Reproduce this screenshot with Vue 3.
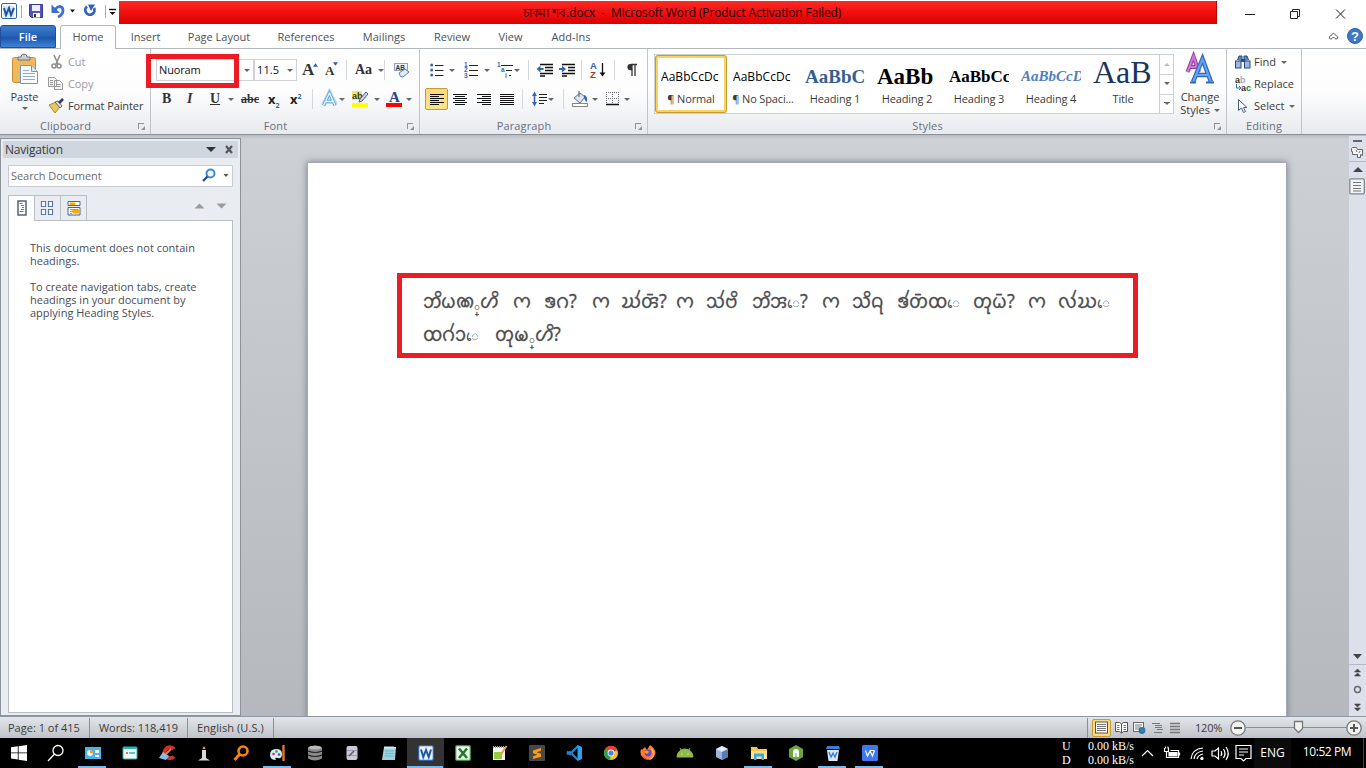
<script setup>
const tabs = ['Home', 'Insert', 'Page Layout', 'References', 'Mailings', 'Review', 'View', 'Add-Ins']
const styles = [
  { cls: 's-normal', sample: 'AaBbCcDc', name: '¶ Normal' },
  { cls: 's-normal', sample: 'AaBbCcDc', name: '¶ No Spaci...' },
  { cls: 's-h1', sample: 'AaBbCc', name: 'Heading 1' },
  { cls: 's-h2', sample: 'AaBb', name: 'Heading 2' },
  { cls: 's-h3', sample: 'AaBbCc', name: 'Heading 3' },
  { cls: 's-h4', sample: 'AaBbCcD', name: 'Heading 4' },
  { cls: 's-title', sample: 'AaB', name: 'Title' }
]
const line1 = ['𑄃𑄨𑄠𑄚◌𑄳𑄦𑄨', '𑄇', '𑄎𑄉?', '𑄇', '𑄊𑄧𑄢𑄴?', '𑄇', '𑄥𑄧𑄝𑄨', '𑄃𑄨𑄞◌𑄬?', '𑄇', '𑄥𑄨𑄙𑄪', '𑄎𑄧𑄖𑄴𑄗◌𑄬', '𑄖𑄪𑄠𑄴?', '𑄇', '𑄣𑄧𑄊◌𑄬']
const line2 = ['𑄗𑄉𑄧𑄘◌𑄬', '𑄖𑄪𑄟◌𑄳𑄦𑄨?']
const lines = [line1, line2].map((l) => l.map((w) => w.split(/(◌𑄳|◌𑄬)/u).filter(Boolean)))
const partClass = (p) => (p === '◌𑄳' ? 'vir' : p === '◌𑄬' ? 'ev' : 'pt')
</script>

<template>
  <div class="win">
    <header class="title">
      <svg class="qat" width="119" height="24" viewBox="0 0 119 24">
        <rect x="1.5" y="3.500" width="15" height="15" rx="1.500" fill="#fff" stroke="#2b65ad" />
        <rect x="3" y="6" width="11" height="11" fill="#d8e8f8" /><path d="M4 8l2 7 3-7 2 7 3-7" fill="none" stroke="#1c58a6" stroke-width="2" />
        <path d="M21.500 5v13M105.500 5v13" stroke="#aab" />
        <path d="M29.500 4.500h13v13h-11l-2-2z" fill="#5357bd" stroke="#3a3a96" /><rect x="32" y="5" width="8" height="6" fill="#eef" /><rect x="33" y="13" width="7" height="4.500" fill="#fff" /><rect x="34" y="14" width="2" height="3" fill="#333" />
        <path d="M55 9.500c4-5 8-3 8 1 0 3-2 5-5 6.500" fill="none" stroke="#3c6fd0" stroke-width="2.800" /><path d="M51.500 4.500v8.500h8.500z" fill="#3c6fd0" />
        <path d="M70 9.500h5l-2.500 3z" fill="#111" />
        <path d="M87 6.500a4.600 4.600 0 1 0 7 1.500" fill="none" stroke="#2f62c0" stroke-width="2.800" /><path d="M88 4.500h7l-4 6.500z" fill="#2f62c0" />
        <path d="M109 9.500h7" stroke="#111" stroke-width="1.400" /><path d="M109.500 12h6l-3 3z" fill="#111" />
      </svg>
      <div class="red"><span>চাকমা শব.docx&nbsp; -&nbsp; Microsoft Word (Product Activation Failed)</span></div>
      <svg class="ctl" width="149" height="24" viewBox="0 0 149 24" fill="none" stroke="#222">
        <path d="M28 14.500h10M73.500 11.500h7v7h-7zM75.500 11.500v-2h7v7h-2M119 9.500l9 9M128 9.500l-9 9" />
      </svg>
    </header>

    <nav class="tabs">
      <div class="file">File</div>
      <div v-for="t in tabs" :key="t" class="tab" :class="['t-' + t.slice(0, 4).trim(), { on: t === 'Home' }]">{{ t }}</div>
      <svg class="help" width="46" height="25" viewBox="0 0 46 25">
        <path d="M9.500 14.500q-1-2 1-2.500l3-3 3 3q2 .500 1 2.500-1.500 1-2.500 0l-1.500-1.500-1.500 1.500q-1 1-2.500 0z" fill="#fff" stroke="#555" />
        <circle cx="35" cy="12" r="7.500" fill="#3c78c8" stroke="#2b61ae" /><text x="35" y="16.500" class="q">?</text>
      </svg>
    </nav>

    <section class="ribbon">
      <div class="grp g-clip">
        <div class="gbody clip">
          <div class="big paste">
            <svg width="30" height="34" viewBox="0 0 30 34">
              <rect x="2.500" y="3.500" width="23" height="25" rx="2" fill="#edb95c" stroke="#c98e33" /><path d="M8 6V3h3q0-3 3-3t3 3h3v3z" fill="#c9ccd2" stroke="#70757d" />
              <path d="M10.500 11.500h11l6 6v12h-17z" fill="#f6faff" stroke="#7b95b8" /><path d="M21.500 11.500v6h6" fill="#dfe9f5" stroke="#7b95b8" /><path d="M13 19.500h12M13 22.500h12M13 25.500h12M13 16.500h6" stroke="#93abc9" />
            </svg>
            <span>Paste</span><i class="dd"></i>
          </div>
          <div class="list">
            <div class="row off"><svg width="18" height="16" viewBox="0 0 18 16" fill="none" stroke="#8f8f8f" stroke-width="1.600"><path d="M5 1l4 9M11 1L7 10" /><circle cx="5" cy="12" r="2" /><circle cx="10" cy="12" r="2" /></svg>Cut</div>
            <div class="row off"><svg width="18" height="16" viewBox="0 0 18 16" fill="#f4f4f4" stroke="#999"><path d="M-.5 1.500h6l2 2v7h-8zM5.500 4.500h5l3 3v6h-8z" /><path d="M1 4.500h3M1 6.500h3M1 8.500h3M7.500 8.500h4M7.500 10.500h4" /></svg>Copy</div>
            <div class="row"><svg width="18" height="16" viewBox="0 0 18 16"><path d="M0 7l7-3 4 5-5 6z" fill="#e8c65a" stroke="#b08a2c" /><path d="M6 4l5 6 2-2-4-5z" fill="#ddd" stroke="#666" /><path d="M10 5l4-4" stroke="#333a66" stroke-width="2.600" /></svg>Format Painter</div>
          </div>
        </div>
        <div class="glabel">Clipboard<i class="launch"></i></div>
      </div>

      <div class="grp g-font">
        <div class="gbody">
          <div class="r1 fr1">
            <div class="box fname"><span>Nuoram</span><i class="dd"></i></div>
            <div class="box fsize"><span>11.5</span><i class="dd"></i></div>
            <span class="ser b18">A<svg class="sup" width="5" height="4" viewBox="0 0 6 4"><path d="M0 4h6L3 0z" fill="#2e5fa8" /></svg></span>
            <span class="ser b14">A<svg class="sup" width="5" height="4" viewBox="0 0 6 4"><path d="M0 0h6L3 4z" fill="#2e5fa8" /></svg></span>
            <i class="sep"></i><span class="ser b15">Aa</span><i class="dd"></i><i class="sep"></i>
            <svg width="17" height="17" viewBox="0 0 17 17"><rect x="1.500" y="1.500" width="13" height="7" fill="#eef4fc" stroke="#8ba4c8" /><text x="2.500" y="7.500" class="tiny">AB</text><path d="M6 11l6-4 4 3-6 5q-3 1-4-4z" fill="#e4ecf8" stroke="#5d7bab" /></svg>
          </div>
          <div class="r2 fr2">
            <b class="ser">B</b><b class="ser it">I</b><b class="ser un">U</b><i class="dd"></i><b class="ser st">abc</b>
            <b class="x">x<sub>2</sub></b><b class="x">x<sup>2</sup></b><i class="sep"></i>
            <svg width="18" height="18" viewBox="0 0 18 18"><path d="M2.500 15L8.500 3l6 12M5 11.500h8" fill="none" stroke="#b8dcf4" stroke-width="5" /><path d="M2.500 15.500L8.500 3l5.500 12.500M5 11.500h7" fill="none" stroke="#5aa2d4" stroke-width="3" /><path d="M2.500 15.500L8.500 3l5.500 12.500M5 11.500h7" fill="none" stroke="#f4fbff" stroke-width="1.300" /></svg><i class="dd"></i>
            <svg width="18" height="18" viewBox="0 0 18 18"><rect x="0" y="1" width="10" height="9" fill="#f7ea5b" /><text x="0" y="9" class="ab">ab</text><path d="M8 9l6-7 2 2-6 7-3 1z" fill="#c8d6e8" stroke="#4b5f80" /><rect x="0" y="13" width="16" height="4" fill="#ff0" /></svg><i class="dd"></i>
            <svg width="18" height="18" viewBox="0 0 18 18"><text x="3" y="12" class="fa">A</text><rect x="0" y="13" width="16" height="4" fill="#f00" /></svg><i class="dd"></i>
          </div>
        </div>
        <div class="glabel">Font<i class="launch"></i></div>
      </div>

      <div class="grp g-para">
        <div class="gbody">
          <div class="r1 pr1">
            <svg width="15" height="14" viewBox="0 0 15 14"><g fill="#3565b5"><circle cx="1.700" cy="2" r="1.500" /><circle cx="1.700" cy="7" r="1.500" /><circle cx="1.700" cy="12" r="1.500" /></g><path d="M5 2.500h8.500M5 7.500h8.500M5 12.500h8.500" stroke="#222" /></svg><i class="dd"></i>
            <svg width="15" height="16" viewBox="0 0 15 16"><g class="num"><text x="0" y="4.500">1</text><text x="0" y="10">2</text><text x="0" y="15.500">3</text></g><path d="M5 3.500h9M5 8.500h9M5 13.500h9" stroke="#222" /></svg><i class="dd"></i>
            <svg width="17" height="16" viewBox="0 0 17 16"><g class="num"><text x="0" y="4.500">1</text><text x="4" y="10">a</text><text x="8" y="15.500">i</text></g><path d="M4 3.500h12M9 8.500h6M12 13.500h2" stroke="#222" /></svg><i class="dd"></i>
            <i class="sep"></i>
            <svg width="16" height="14" viewBox="0 0 16 14"><path d="M3 1.500h13M8 4.500h8M8 7.500h8M3 10.500h13M3 13h5" stroke="#111" stroke-width="1.500" /><path d="M-.5 6l4-3.500v2.500h3v2h-3v2.500z" fill="#3565b5" /></svg>
            <svg width="16" height="14" viewBox="0 0 16 14"><path d="M3 1.500h13M9 4.500h7M9 7.500h7M3 10.500h13M3 13h5" stroke="#111" stroke-width="1.500" /><path d="M7 6L3 2.500v2.500H0v2h3v2.500z" fill="#3565b5" /></svg>
            <i class="sep"></i>
            <svg width="16" height="18" viewBox="0 0 16 18"><text x="0" y="8" class="az blue">A</text><text x="0" y="16.500" class="az">Z</text><path d="M12.500 2v12" stroke="#111" stroke-width="1.300" /><path d="M9.500 11.500h6l-3 4z" fill="#111" /></svg>
            <i class="sep"></i>
            <svg width="11" height="14" viewBox="0 0 11 14"><path d="M5 1.500h6M6 1v12M9 1v12" stroke="#333" stroke-width="1.300" /><path d="M6 1H4.500a3 3 0 0 0 0 6.200H6z" fill="#333" /></svg>
          </div>
          <div class="r2 pr2">
            <div class="active"><svg width="14" height="13" viewBox="0 0 14 13"><path d="M0 1.500h14M0 3.500h9M0 5.500h14M0 7.500h9M0 9.500h14M0 11.500h9" class="bar" /></svg></div>
            <svg width="14" height="13" viewBox="0 0 14 13"><path d="M0 1.500h14M2 3.500h10M0 5.500h14M2 7.500h10M0 9.500h14M2 11.500h10" class="bar" /></svg>
            <svg width="14" height="13" viewBox="0 0 14 13"><path d="M0 1.500h14M5 3.500h9M0 5.500h14M5 7.500h9M0 9.500h14M5 11.500h9" class="bar" /></svg>
            <svg width="14" height="13" viewBox="0 0 14 13"><path d="M0 1.500h14M0 3.500h14M0 5.500h14M0 7.500h14M0 9.500h14M0 11.500h14" class="bar" /></svg>
            <i class="sep"></i>
            <svg width="16" height="16" viewBox="0 0 16 16"><path d="M0 5l2.500-4.500L5 5H3.300v6H5l-2.500 4.500L0 11h1.700V5z" fill="#3565b5" /><path d="M7 3.500h8M7 6.500h8M7 9.500h8M7 12.500h5" stroke="#222" /></svg><i class="dd"></i>
            <i class="sep"></i>
            <svg width="18" height="16" viewBox="0 0 18 16"><path d="M2 7l6-5 5 4-5 6z" fill="#d9e4f4" stroke="#5a6f94" /><path d="M7 0v6" stroke="#555" /><path d="M12 4q4 1 3 7-2-1-3-4z" fill="#3565b5" /><rect x=".5" y="12.500" width="15" height="3" fill="#fff" stroke="#888" /></svg><i class="dd"></i>
            <svg width="14" height="14" viewBox="0 0 14 14"><path d="M.5 0v13M6.500 0v13M12.500 0v13M0 .5h13M0 6.500h13" stroke="#667" stroke-dasharray="1 1" /><path d="M0 12.500h13" stroke="#111" stroke-width="1.500" /></svg><i class="dd"></i>
          </div>
        </div>
        <div class="glabel">Paragraph<i class="launch"></i></div>
      </div>

      <div class="grp g-styles">
        <div class="gbody sbody">
          <div class="gallery">
            <div v-for="(s, i) in styles" :key="i" class="scell" :class="{ sel: i === 0 }"><div class="sample" :class="s.cls">{{ s.sample }}</div><div class="sname">{{ s.name }}</div></div>
            <div class="gscroll"><i class="dd up dim"></i><i class="dd"></i><i class="dd more"></i></div>
          </div>
          <div class="big change">
            <svg width="32" height="30" viewBox="0 0 32 30"><path d="M3.500 18L9.500 2.500 15 18M5 13h8" fill="none" stroke="#9b3fa8" stroke-width="4" /><path d="M3.500 18L9.500 2.500 15 18M5 13h8" fill="none" stroke="#c77ad0" stroke-width="2" /><path d="M9 28L18.500 5 27 28M12 21h13" fill="none" stroke="#2d6ac4" stroke-width="4.500" /><path d="M9 28L18.500 5 27 28M12 21h13" fill="none" stroke="#6ba4ea" stroke-width="2" /><path d="M6 28.500h6M22 28.500h8" stroke="#2d6ac4" stroke-width="2" /></svg>
            <span>Change</span><span>Styles <i class="dd in"></i></span>
          </div>
        </div>
        <div class="glabel">Styles<i class="launch"></i></div>
      </div>

      <div class="grp g-edit">
        <div class="gbody list elist">
          <div class="row"><svg width="19" height="16" viewBox="0 0 19 16"><path d="M2.500 6l1.500-4h3v5M13.500 6l-1.500-4H9v5" fill="#5f83bb" stroke="#274a80" /><rect x=".5" y="7" width="5.500" height="7" fill="#9cb8de" stroke="#274a80" /><rect x="9.500" y="7" width="5.500" height="7" fill="#9cb8de" stroke="#274a80" /><path d="M6 6.500h4" stroke="#274a80" stroke-width="3" /></svg>Find <i class="dd in"></i></div>
          <div class="row"><svg width="19" height="16" viewBox="0 0 19 16"><text x="0" y="7" class="rep">a<tspan fill="#aaa">b</tspan></text><text x="6" y="15" class="rep">a<tspan fill="#178a2c">c</tspan></text><path d="M1.500 8v4h4M4 10l2 2-2 2" fill="none" stroke="#3565b5" /></svg>Replace</div>
          <div class="row"><svg width="19" height="16" viewBox="0 0 19 16"><path d="M3.500 1.500v11l3-2.500 2 4.500 2-1-2-4h3.500z" fill="#fff" stroke="#4a6080" /></svg>Select <i class="dd in"></i></div>
        </div>
        <div class="glabel">Editing</div>
      </div>
      <div class="hl hl-font"></div>
    </section>

    <main class="work">
      <aside class="pane">
        <div class="phead">Navigation<svg width="34" height="17" viewBox="0 0 34 17"><path d="M2 6h10l-5 5z" fill="#333" /><path d="M22 5l6 7M28 5l-6 7" stroke="#555" stroke-width="2.200" /></svg></div>
        <div class="search">Search Document<svg width="32" height="18" viewBox="0 0 32 18"><circle cx="10.500" cy="7.500" r="4" fill="#eaf6ff" stroke="#3b8cd0" stroke-width="2" /><path d="M7.500 10.500l-4.500 4.500" stroke="#274a98" stroke-width="2.400" /><path d="M23.500 8h5l-2.500 3z" fill="#555" /></svg></div>
        <div class="ptabs">
          <div class="on"><svg width="16" height="17" viewBox="0 0 16 17"><rect x="4" y="1" width="8" height="14" fill="#fff" stroke="#44597a" stroke-width="1.400" /><path d="M5.500 3.500h3M7 5.500h3M8 7.500h2M7 9.500h3M5.500 11.500h4" stroke="#777" /></svg></div>
          <div><svg width="16" height="17" viewBox="0 0 16 17" fill="#fff" stroke="#5c78a6" stroke-width="1.200"><path d="M1.500 1.500h4v5h-4zM8.500 1.500h4v5h-4zM1.500 9.500h4v5h-4zM8.500 9.500h4v5h-4z" /></svg></div>
          <div><svg width="16" height="17" viewBox="0 0 16 17"><path d="M2 1.500h12v4H2zM2 7.500h12v7.500H2z" fill="#fff" stroke="#4b6288" /><path d="M4 3h5v1.500H4zM7 10h6v3H7z" fill="#f3ae00" stroke="#f3ae00" /><path d="M4 9.500h8M4 11.500h3M4 13.500h2" stroke="#89a" /></svg></div>
          <svg class="pn" width="36" height="12" viewBox="0 0 36 12" fill="#9b9b9b"><path d="M-1.500 8.500h10l-5-5zM20.500 3.500h10l-5 5z" /></svg>
        </div>
        <div class="pbody"><p>This document does not contain<br>headings.</p><p>To create navigation tabs, create<br>headings in your document by<br>applying Heading Styles.</p></div>
      </aside>
      <div class="canvas">
        <div class="page">
          <div class="frame">
            <div v-for="(l, n) in lines" :key="n" class="ln" :class="'l' + (n + 1)">
              <span v-for="(w, i) in l" :key="i"><span v-for="(p, k) in w" :key="k" :class="partClass(p)">{{ p }}</span></span>
            </div>
          </div>
        </div>
      </div>
      <div class="vscroll">
        <svg width="17" height="62" viewBox="0 0 17 62"><path d="M4 5h9" stroke="#666" stroke-width="2" /><path d="M3.500 11.500h4l1 2h5v6l-2-1v3h-3v-3h-5v-3h-1v-3z" fill="#f4f4f4" stroke="#666" /><path d="M7 14l1 2M10 17l1-2" stroke="#777" /><path d="M0 25.500h17" stroke="#b4bac4" /><path d="M4 36h10l-5-5z" fill="#444" /><rect x=".8" y="42.800" width="14.500" height="15" rx="1" fill="#f1f3f6" stroke="#7e8794" stroke-width="1.300" /><path d="M4 46.500h8M4 49.500h8M4 52.500h8M4 55h8" stroke="#777" /></svg>
        <svg width="17" height="66" viewBox="0 0 17 66"><path d="M4 4h9l-4.500 5z" fill="#444" /><path d="M0 14.500h17" stroke="#b4bac4" /><path d="M5.500 22h6l-3-3zM5.500 26h6l-3-3z" fill="#444" stroke="#444" stroke-width=".6" /><circle cx="8.500" cy="39.500" r="3" fill="none" stroke="#666" stroke-width="1.400" /><path d="M5.500 54h6l-3 3zM5.500 58h6l-3 3z" fill="#444" stroke="#444" stroke-width=".6" /></svg>
      </div>
    </main>

    <footer class="status">
      <div class="st1">Page: 1 of 415</div><div class="st2">Words: 118,419</div><div class="st3">English (U.S.)</div>
      <div class="views">
        <div class="von"><svg width="13" height="13" viewBox="0 0 13 13"><rect x=".5" y="1" width="12" height="11" fill="#fff" stroke="#555" /><path d="M2 3.500h9M2 5.500h9M2 7.500h9M2 9.500h9" stroke="#777" /></svg></div>
        <svg width="13" height="13" viewBox="0 0 13 13"><path d="M.5 1.500h4l2 1.500 2-1.500h4v9h-4L6.500 12l-2-1.500h-4zM6.500 3v9" fill="#fff" stroke="#555" /><path d="M2 4.500h2.500M2 6.500h2.500M2 8.500h2.500M8.500 4.500H11M8.500 6.500H11M8.500 8.500H11" stroke="#777" /></svg>
        <svg width="13" height="13" viewBox="0 0 13 13"><rect x=".5" y="1.500" width="10" height="9" fill="#fff" stroke="#666" /><path d="M2 4h7M2 6h6M2 8h4" stroke="#777" /><circle cx="9" cy="9.500" r="3.400" fill="#2a73b8" /><path d="M8 8l3 1-2 2z" fill="#46a24a" /></svg>
        <svg width="13" height="13" viewBox="0 0 13 13" stroke="#777"><path d="M1 2.500h8M4 4.500h7M4 6.500h7M6 8.500h6M3 11.500h8" /></svg>
        <svg width="13" height="13" viewBox="0 0 13 13" stroke="#777"><path d="M1 2.500h10M1 5.500h10M1 8.500h10M1 11.500h10" stroke-width="1.600" /></svg>
      </div>
      <span class="pct">120%</span>
      <svg class="zoom" width="136" height="20" viewBox="0 0 136 20"><path d="M16 9.500h104" stroke="#7f90a8" /><g fill="#f2f2f2" stroke="#777" stroke-width="1.300"><circle cx="8" cy="10" r="7.200" /><circle cx="124" cy="10" r="7.200" /><path d="M64.500 3.500h8v7l-4 4-4-4z" /></g><path d="M4 10h8M120 10h8M124 6v8" stroke="#555" stroke-width="2" /></svg>
    </footer>

    <footer class="task">
      <div><svg viewBox="0 0 16 16"><path d="M0 2.300l6.800-1v6.200H0zM7.600 1.200L16 0v7.500H7.600zM0 8.300h6.800v6.300l-6.800-1zM7.600 8.300H16V16l-8.400-1.200z" fill="#fff" /></svg></div>
      <div><svg viewBox="0 0 16 16"><circle cx="10" cy="5.500" r="5" fill="none" stroke="#fff" stroke-width="1.300" /><path d="M6.500 9L0 16" stroke="#fff" stroke-width="1.300" /></svg></div>
      <div class="run"><svg viewBox="0 0 16 16"><rect y="2" width="16" height="12" fill="#48b4ee" /><circle cx="5" cy="8" r="3" fill="#e9f7ff" /><path d="M5 8V5a3 3 0 0 1 3 3z" fill="#f69a1c" /><path d="M10 5h4v3h-4zM10 10h4v2h-4z" fill="#fff" /></svg></div>
      <div><svg viewBox="0 0 16 16"><rect x="1" y="2" width="14" height="12" rx="1" fill="#eefaf9" stroke="#2bb6b0" /><path d="M1 2h14v2H1z" fill="#2bb6b0" /><path d="M4 8h2" stroke="#f06a4c" stroke-width="2" /><path d="M7 8h6" stroke="#2bb6b0" stroke-width="1.500" /></svg></div>
      <div><svg viewBox="0 0 16 16"><path d="M15 4A5.500 5.500 0 1 0 15 11.500" fill="none" stroke="#d62c2c" stroke-width="4" /><path d="M0 13l4-6 6 4-3 4z" fill="#8abce8" /><path d="M7 9l5-5" stroke="#c58b4a" stroke-width="2" /></svg></div>
      <div><svg viewBox="0 0 16 16"><path d="M6 5h4v8l4 2.500H2L6 13z" fill="#d9d9d9" /><path d="M8 1l1.500 3h-3z" fill="#f4a640" /></svg></div>
      <div><svg viewBox="0 0 16 16"><circle cx="10" cy="6" r="4.500" fill="none" stroke="#f5820b" stroke-width="2.600" /><path d="M6.500 9.500L1.500 15" stroke="#f5820b" stroke-width="3" /></svg></div>
      <div class="run"><svg viewBox="0 0 16 16"><path d="M0 10q0-6 6-6t6 5-4 4-2 2q-6 0-6-5z" fill="#d6ecf7" /><circle cx="3.500" cy="9" r="1.300" fill="#d83b3b" /><circle cx="6.500" cy="6.500" r="1.300" fill="#3b9b4b" /><circle cx="9" cy="9.500" r="1.300" fill="#2c66c9" /><path d="M13.500 0v16" stroke="#dd7b22" stroke-width="2.400" /></svg></div>
      <div><svg viewBox="0 0 16 16"><path d="M1 2.500q7-4 14 0v11q-7 4-14 0z" fill="#8a8a8a" /><path d="M1 6q7 3 14 0M1 10q7 3 14 0" fill="none" stroke="#222" stroke-width="1.200" /><ellipse cx="8" cy="2.500" rx="6.500" ry="1.700" fill="#bbb" /></svg></div>
      <div><svg viewBox="0 0 16 16"><rect x="2.500" y="1" width="11" height="14" rx="2" fill="#c9cbd4" /><path d="M3 5.500h10M3 10.500h10" stroke="#9a9dab" /><path d="M5 11l5-5" stroke="#555c72" stroke-width="1.600" /></svg></div>
      <div><svg viewBox="0 0 16 16"><path d="M3 2h12l-1 13H1z" fill="#9bd3de" /><path d="M3 2h12v1.500H3z" fill="#dfeef2" /><path d="M4 1v2M6 1v2M8 1v2M10 1v2M12 1v2" stroke="#ddd" /><path d="M4 6h9M4 8.500h9M3.500 11h9" stroke="#5fa3b4" stroke-width=".6" /></svg></div>
      <div class="run act"><svg viewBox="0 0 16 16"><rect x=".7" y=".7" width="14.600" height="14.600" rx="1.500" fill="#e9f1fb" stroke="#2b65ad" stroke-width="1.200" /><path d="M3 4.500l2.300 7.500L8 5l2.700 7L13 4.500" fill="none" stroke="#1c58a6" stroke-width="2" /></svg></div>
      <div><svg viewBox="0 0 16 16"><rect x=".7" y=".7" width="14.600" height="14.600" rx="1" fill="#eef7ec" stroke="#3c8c3c" stroke-width="1.200" /><path d="M4 3.500l8 9.500M12 3.500L4 13" stroke="#237a2d" stroke-width="2.600" /></svg></div>
      <div><svg viewBox="0 0 16 16"><path d="M1 2h12v13H1z" fill="#f4f6ee" /><path d="M2 7h8v7H2z" fill="#8fcf3c" /><path d="M1 2h12" stroke="#999" stroke-width="2" stroke-dasharray="1 1" /><path d="M8 11l6.500-10" stroke="#e2a13a" stroke-width="2" /></svg></div>
      <div><svg viewBox="0 0 16 16"><rect width="16" height="16" rx="1" fill="#474747" /><path d="M12 3v2.800L7.500 7.300 12 8.700v3L4 14v-2.800l4.400-1.400L4 8.300V5.500z" fill="#ff9a14" /></svg></div>
      <div><svg viewBox="0 0 16 16"><path d="M12 1L4 9 1 6.500M12 15L4 7 1 9.500" fill="none" stroke="#1c86d0" stroke-width="2.200" /><path d="M11.500 0L16 2v12l-4.500 2z" fill="#2aa3f0" /></svg></div>
      <div><svg viewBox="0 0 16 16"><circle cx="8" cy="8" r="7" fill="#f4c425" /><path d="M8 8L1.900 4.500A7 7 0 0 1 14.500 5z" fill="#df4232" /><path d="M8 8L1.900 4.500A7 7 0 0 0 7 15z" fill="#2e9e50" /><circle cx="8" cy="8" r="3.400" fill="#fff" /><circle cx="8" cy="8" r="2.600" fill="#4385f0" /></svg></div>
      <div><svg viewBox="0 0 16 16"><path d="M1 4q1 1 2 0l2-2 2 3 3-5q5 3 5.500 8A7.600 7.600 0 1 1 1 4z" fill="#ff7a24" /><path d="M11 2q4 4 3 8a6 6 0 0 1-6 5q5-2 5-6z" fill="#ffc52e" /><path d="M2 10a6.500 6.500 0 0 0 9 4q-6 1-9-4z" fill="#e8264f" /><circle cx="8" cy="8" r="3.400" fill="#6b45c8" /><path d="M4 7q3-3 5 0l-2 2z" fill="#ff9a2c" /></svg></div>
      <div><svg viewBox="0 0 16 16"><path d="M0 12a8 8 0 0 1 16 0zM4 5L3 3M12 5l1-2" fill="#8fba48" stroke="#8fba48" /><path d="M4.500 9h1M10.500 9h1" stroke="#fff" /></svg></div>
      <div><svg viewBox="0 0 16 16"><path d="M8 1l6 3v8l-6 3-6-3V4z" fill="#9cb3da" /><path d="M8 1l6 3-6 3-6-3z" fill="#e2ebf8" /><path d="M8 7l6-3v8l-6 3z" fill="#5d7bb3" /></svg></div>
      <div class="run"><svg viewBox="0 0 16 16"><path d="M0 2h6l1 2h9v10H0z" fill="#f7c64b" /><path d="M0 6h16v8H0z" fill="#fde08a" /><path d="M3 15V8.500h10V15h-2.500v-3.500h-5V15z" fill="#35a7e8" /></svg></div>
      <div><svg viewBox="0 0 16 16"><path d="M8 0l7 4v8l-7 4-7-4V4z" fill="#69a83e" /><path d="M5 12V7a3 3 0 0 1 6 0v5H8.500V8h-1v4z" fill="#fff" /></svg></div>
      <div class="run"><svg viewBox="0 0 16 16"><path d="M2 5h12l-1.500 11h-9z" fill="#dde6f4" /><path d="M1 4l1-3h12l1 3z" fill="#3b7cdf" /><path d="M4 7l2 5 2-4 2 4 2-5" fill="none" stroke="#3b7cdf" stroke-width="1.400" /></svg></div>
      <div class="run"><svg viewBox="0 0 16 16"><rect width="16" height="16" rx="1.500" fill="#3f79f2" /><path d="M3.500 5.500l2 5.500L8 6l2.500 5 2-5.500M8 5.500h4.500" fill="none" stroke="#fff" stroke-width="1.200" /></svg></div>
      <div class="tray">
        <div class="net"><span>U</span><span>0.00 kB/s</span><span>D</span><span>0.00 kB/s</span></div>
        <svg width="112" height="30" viewBox="0 0 112 30" fill="none" stroke="#fff" stroke-width="1.200">
          <path d="M1 18l5.500-5.500L12 18" /><path d="M29.500 12.500h8v7h-12v-4" /><path d="M28 14.500h8v3.500h-8z" fill="#fff" /><path d="M38.500 14.500v3M23.500 10v3.500h4V10M24.500 8.500v2M27 8.500v2M25.500 14v2" />
          <path d="M50 21q1-10 12-11M53 21q1-7 9-8M56 21q1-4 6-5M59.500 21l2-2" /><circle cx="61" cy="20.500" r="1" fill="#fff" />
          <path d="M71 13h3l3.500-3v11L74 18h-3zM80 13q1.500 2.500 0 5M82.500 11q3 4.500 0 9M85 9q4.500 6.500 0 13" />
          <path d="M95 7.500h15v13h-5l-2.500 2.500-2.500-2.500h-5zM98 11h9M98 14h9M98 17h5" />
        </svg>
        <div class="eng">ENG</div><div class="clock">10:52 PM</div>
      </div>
    </footer>
  </div>
</template>

<style>
html, body { margin: 0; overflow: hidden; }
</style>
<style scoped>
.win { width: 1366px; height: 768px; display: flex; flex-direction: column; font: 11px/14px "Open Sans", "Noto Sans", sans-serif; color: #3b3b3b; background: #fff; overflow: hidden; }
svg { display: block; flex: none; overflow: visible; }
svg text { font-family: "Liberation Sans", sans-serif; font-weight: bold; }
i { font-style: normal; }
.title { height: 24px; display: flex; }
.red { width: 1098px; height: 23px; margin-top: 1px; box-sizing: border-box; border-right: 1px solid #b00; background: linear-gradient(#ff2a24, #f01010 50%, #dc0000); color: #1d0000; font-size: 12px; line-height: 24px; text-align: center; white-space: nowrap; }
.red span { letter-spacing: -.12px; margin-left: 29px; }
.tabs { height: 25px; display: flex; border-bottom: 1px solid #b3b8be; box-sizing: border-box; }
.file { width: 56px; margin-top: 1px; background: linear-gradient(#3d7ccb, #2560b4 50%, #1c55ab 55%, #3f84d6); color: #fff; text-align: center; line-height: 22px; font-weight: 600; border-radius: 3px 3px 0 0; border: 1px solid #1e4f98; box-sizing: border-box; }
.tab { line-height: 26px; text-align: center; color: #4c5057; font-size: 11px; }
.tab.on { margin: 1px 0 -1px 4px; line-height: 22px; border: 1px solid #b3b8be; border-bottom: 0; border-radius: 3px 3px 0 0; background: #fff; box-sizing: border-box; }
.t-Home { width: 56px; } .t-Inse { width: 59px; } .t-Page { width: 88px; } .t-Refe { width: 86px; } .t-Mail { width: 70px; } .t-Revi { width: 66px; } .t-View { width: 51px; } .t-Add- { width: 70px; }
.help { margin-left: auto; }
.q { font-size: 13px; fill: #fff; text-anchor: middle; }
.ribbon { height: 86px; box-sizing: border-box; border-bottom: 1px solid #8c9198; display: flex; background: linear-gradient(#fff, #fdfdfe 50%, #e7eaee); position: relative; }
.grp { display: flex; flex-direction: column; border-right: 1px solid #bfc4cb; box-sizing: border-box; }
.g-clip { width: 151px; } .g-font { width: 269px; } .g-para { width: 228px; } .g-styles { width: 579px; } .g-edit { width: 75px; }
.gbody { height: 68px; }
.glabel { text-align: center; color: #6a6e80; line-height: 17px; position: relative; letter-spacing: .15px; padding-right: 19px; }
.g-edit .glabel { padding: 0; }
.launch { position: absolute; right: 6px; top: 6px; width: 5px; height: 5px; border-left: 1px solid #8c919c; border-top: 1px solid #8c919c; }
.launch::after { content: ""; position: absolute; left: 2px; top: 2px; border: 2px solid #8c919c; border-left-color: transparent; border-top-color: transparent; }
.dd { display: block; width: 0; height: 0; border: 3px solid transparent; border-top-color: #666; border-bottom: 0; }
.dd.up { transform: rotate(180deg); } .dd.dim { border-top-color: #bbb; } .dd.in { display: inline-block; margin-left: 1px; vertical-align: 2px; }
.clip { display: flex; }
.big { display: flex; flex-direction: column; align-items: center; line-height: 13px; }
.paste { width: 49px; padding-top: 5px; box-sizing: border-box; }
.paste span { margin-top: 2px; margin-bottom: 4px; }
.list { display: flex; flex-direction: column; padding-top: 2px; box-sizing: border-box; }
.row { height: 22px; display: flex; align-items: center; white-space: nowrap; }
.row svg { margin-right: 1px; } .row.off { color: #9a9a9a; } .row .dd { margin-left: 5px; }
.clip .row { letter-spacing: -.1px; }
.r1, .r2 { display: grid; align-items: center; justify-items: start; }
.r1 { height: 22px; margin-top: 10px; } .r2 { height: 22px; margin-top: 7px; }
.fr1 { grid-template-columns: 98px 45px 23px 21px 9px 16px 13px 9px 20px; padding-left: 5px; }
.fr1 > :nth-child(n+3) { margin-left: 3px; }
.box { display: flex; align-items: center; justify-content: space-between; height: 20px; border: 1px solid #cfd3d8; padding: 0 3px 0 2px; background: #fff; color: #111; }
.fname { width: 91px; letter-spacing: -.15px; } .fsize { width: 36px; letter-spacing: .1px; }
.ser { font-family: "Liberation Serif", serif; font-weight: bold; color: #333; position: relative; line-height: 18px; }
.b18 { font-size: 17px; } .b14 { font-size: 13px; top: 1px; } .b15 { font-size: 14px; }
.sup { position: absolute; left: 100%; top: 2px; margin-left: -1px; }
.b14 .sup { top: 0; }
.fr1 .b15 + .dd { margin-left: 10px; }
.sep { width: 1px; height: 20px; background: #d4d8dd; }
.fr2 { grid-template-columns: 24px 24px 18px 13px 27px 22px 22px 9px 18px 13px 22px 12px 20px 12px; padding-left: 11px; font-size: 14px; }
.fr2 .it { font-style: italic; padding-left: 1px; } .fr2 .un { text-decoration: underline; } .fr2 .st { text-decoration: line-through; font-size: 12px; }
.x { font-size: 13px; line-height: 14px; color: #222; } .x sub, .x sup { font-size: 7px; color: #2e5fa8; line-height: 0; }
.tiny { font-size: 6.500px; fill: #333; } .ab { font-size: 9px; fill: #333; } svg .fa { font: bold 15px "Liberation Serif", serif; fill: #27477c; }
.num text { font-size: 6.500px; fill: #3565b5; } .az { font-size: 9.500px; fill: #a33a3a; } .blue { fill: #3565b5; } .rep { font-size: 9px; fill: #333; }
.bar { stroke: #111; stroke-width: 1; }
.pr1 { grid-template-columns: 19px 15px 20px 13px 17px 14px 9px 22px 22px 9px 24px 12px 14px; padding-left: 10px; }
.pr2 { grid-template-columns: 28px 24px 23px 22px 10px 16px 15px 9px 20px 14px 18px 8px; padding-left: 5px; }
.active { width: 21px; height: 20px; border: 1px solid #c69a35; border-radius: 2px; background: linear-gradient(#fbd977, #fbe58a); display: grid; place-items: center; }
.sbody { display: flex; }
.gallery { display: flex; width: 518px; height: 58px; margin: 5px 0 0 6px; border: 1px solid #ccd0d5; background: #fff; }
.scell { width: 72px; height: 58px; text-align: center; overflow: hidden; box-sizing: border-box; padding: 3px 6px 0; white-space: nowrap; }
.scell.sel { border: 3px solid #f8d45f; outline: 1px solid #c69a35; outline-offset: -1px; padding: 0 3px; border-radius: 3px; }
.sample { height: 34px; line-height: 37px; overflow: hidden; color: #000; text-align: left; width: 60px; }
.sname { margin: 0 -6px; line-height: 14px; letter-spacing: -.15px; }
.s-normal { font-size: 12px; letter-spacing: .05px; }
.s-h1, .s-h2, .s-h3, .s-h4, .s-title { font-family: "Liberation Serif", serif; }
.s-h1 { font-size: 19px; font-weight: bold; color: #365f91; } .s-h2 { font-size: 23px; font-weight: bold; } .s-h3 { font-size: 17px; font-weight: bold; } .s-h4 { font-size: 15px; font-style: italic; font-weight: bold; color: #4f81bd; } .s-title { font-size: 32px; color: #17365d; line-height: 28px; }
.gscroll { flex: 1; border-left: 1px solid #ccd0d5; display: grid; grid-template-rows: repeat(3, 1fr); place-items: center; background: linear-gradient(#ccd0d5, #ccd0d5) 0 19px / 100% 1px no-repeat, linear-gradient(#ccd0d5, #ccd0d5) 0 39px / 100% 1px no-repeat; }
.more { position: relative; }
.more::before { content: ""; position: absolute; left: -3px; top: -3px; width: 6px; height: 1px; background: #666; }
.change { margin: 5px 0 0; width: 52px; } .change span { white-space: nowrap; } .change span:nth-of-type(1) { margin-top: 6px; }
.elist { padding-left: 8px; }
.elist .row svg { margin-right: 0; }
.hl { border: 5px solid #ed1c24; box-sizing: border-box; position: absolute; }
.hl-font { left: 146px; top: 5px; width: 93px; height: 34px; }
.work { height: 581px; display: flex; background: linear-gradient(#b9bdc3, #cdd0d5 4px, #b5b9be); padding-top: 1px; box-sizing: border-box; }
.pane { width: 241px; height: 578px; margin-top: 2px; border: 1px solid #8e939b; background: #e9ecf1; box-sizing: border-box; padding: 2px 2px 0; display: flex; flex-direction: column; }
.phead { height: 17px; background: #cfd6de; line-height: 17px; padding-left: 2px; display: flex; justify-content: space-between; font-size: 12px; letter-spacing: -.2px; }
.search { height: 20px; margin: 7px 5px 0; border: 1px solid #c8ccd2; background: #fff; line-height: 20px; padding-left: 2px; display: flex; justify-content: space-between; color: #6c6c6c; letter-spacing: -.05px; }
.ptabs { display: flex; margin: 8px 5px 0; height: 25px; }
.ptabs > div { width: 25px; height: 24px; border: 1px solid #b9bdc4; border-left-width: 0; border-bottom: 0; display: grid; place-items: center; }
.ptabs > .on { background: #fff; border-left-width: 1px; height: 25px; margin-bottom: -1px; position: relative; }
.pn { margin: 5px 1px 0 auto; }
.pbody { height: 493px; box-sizing: border-box; margin: 0 5px; border: 1px solid #b9bdc4; background: #fff; padding: 20px 0 0 21px; color: #4a4c58; line-height: 13px; white-space: nowrap; }
.pbody p { margin: 0 0 13px; }
.canvas { flex: 1; padding: 26px 0 0 66px; overflow: hidden; }
.page { width: 980px; height: 560px; background: #fff; border: 1px solid #a4aab3; box-shadow: 0 0 7px #7c8087; padding: 110px 0 0 89px; box-sizing: border-box; }
.frame { width: 741px; height: 85px; border: 5px solid #ed1c24; box-sizing: border-box; padding: 6px 0 0 21px; color: #4d4d4d; }
.ln { display: grid; height: 33px; font: 18px/33px "Noto Sans", sans-serif; white-space: nowrap; justify-items: start; -webkit-text-stroke: .25px #4d4d4d; transform: scaleY(1.1); }
.l1 { grid-template-columns: 90px 31px 48px 29px 55px 30px 46px 70px 30px 45px 76px 55px 30px 50px; }
.l2 { grid-template-columns: 72px 80px; }
.vir { font-size: 10px; line-height: 10px; position: relative; top: 3px; } .ev { font-size: 14px; line-height: 14px; -webkit-text-stroke: 0; }
.vscroll { width: 17px; background: #dbe0ea; display: flex; flex-direction: column; justify-content: space-between; }
.status { height: 22px; display: flex; align-items: center; border-top: 1px solid #8e979f; box-sizing: border-box; background: linear-gradient(#e3e6ea, #bfc3c9); line-height: 19px; }
.status > [class^="st"] { border-right: 1px solid #8a9098; height: 20px; box-sizing: border-box; padding-left: 8px; white-space: nowrap; }
.status > .st1 { width: 90px; } .status > .st2 { width: 98px; padding-left: 9px; letter-spacing: -.05px; } .status > .st3 { width: 86px; padding-left: 9px; letter-spacing: .1px; }
.views { display: flex; align-items: center; gap: 5px; margin-left: auto; border-left: 1px solid #8a9098; padding-left: 4px; height: 20px; }
.von { width: 17px; height: 16px; border: 1px solid #c69a35; border-radius: 2px; background: #fbdc7c; display: grid; place-items: center; margin-right: -1px; }
.pct { margin-left: 13px; width: 35px; letter-spacing: -.2px; }
.task { height: 30px; background: #000; display: flex; }
.task > div { width: 37px; display: grid; place-items: center; box-sizing: border-box; position: relative; }
.task > div > svg { width: 16px; height: 16px; }
.task .run::after { content: ""; position: absolute; bottom: 0; left: 4px; width: 28px; height: 2px; background: #76b9ed; }
.task .act { background: #333; } .task .act::after { left: 0; width: 36px; }
.task > .tray { width: auto; margin-left: auto; display: flex; align-items: stretch; color: #fff; }
.task > .tray > svg { width: 112px; height: 30px; margin-left: 8px; }
.net { display: grid; grid-template-columns: 26px 45px; grid-template-rows: 14px 14px; font: 12px/14px "Liberation Serif", serif; padding-top: 1px; white-space: nowrap; }
.eng { width: 37px; text-align: center; line-height: 29px; background: #0b0b0b; margin-left: 1px; font-size: 12px; }
.clock { width: 72px; text-align: center; line-height: 28px; font-size: 12px; letter-spacing: -.4px; border-right: 1px solid #444; margin-right: 2px; }
</style>
